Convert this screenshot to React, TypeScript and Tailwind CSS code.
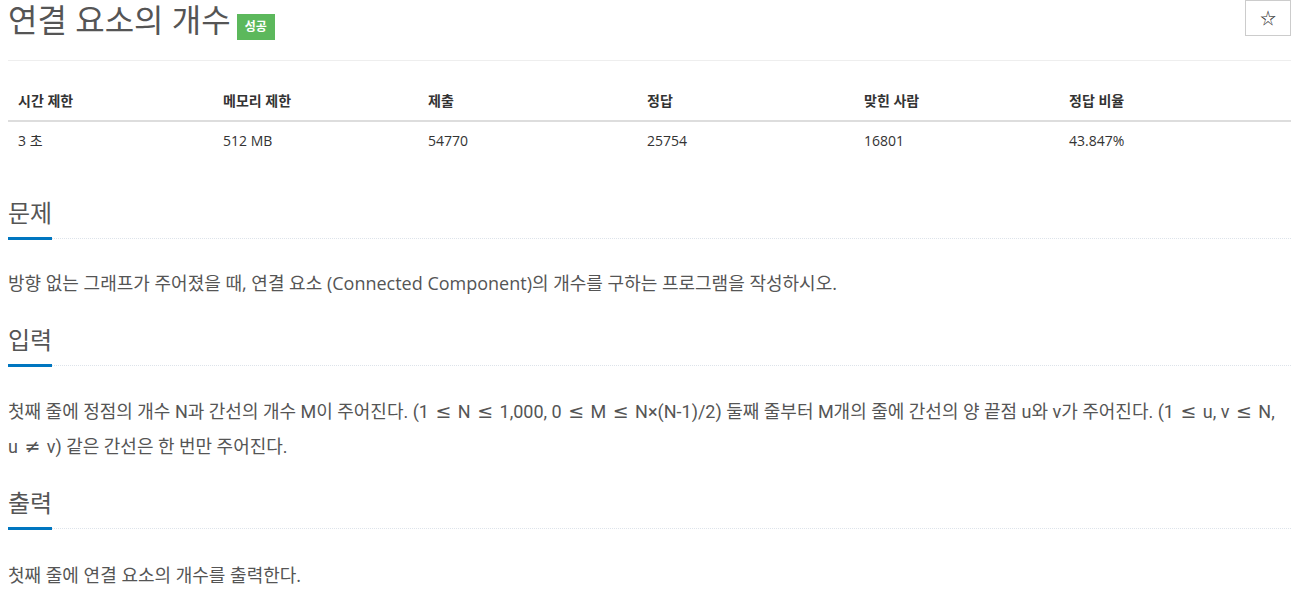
const font = { fontFamily: '"Open Sans", "Noto Sans CJK KR", sans-serif' };
const inputFont = { fontFamily: 'Roboto, "Noto Sans CJK KR", sans-serif' };

const stats = [
  { label: '시간 제한', value: '3 초', w: 'w-[205px]' },
  { label: '메모리 제한', value: '512 MB', w: 'w-[205px]' },
  { label: '제출', value: '54770', w: 'w-[219px]' },
  { label: '정답', value: '25754', w: 'w-[217px]' },
  { label: '맞힌 사람', value: '16801', w: 'w-[205px]' },
  { label: '정답 비율', value: '43.847%', w: '' },
];

function Section({ title, children, className }: { title: string; children: React.ReactNode; className?: string }) {
  return (
    <section className={className}>
      <div className="flex items-end">
        <h2 className="text-[24px] leading-[36px] text-[#555] pb-[6px] border-b-[3px] border-[#0076c0]">{title}</h2>
        <div className="flex-1 border-b border-dotted border-[#dde3ea] mb-[1px]" />
      </div>
      {children}
    </section>
  );
}

// math symbols rendered in a wider font, like the original page
function Sym({ c }: { c: string }) {
  return <span className="font-['DejaVu_Sans'] text-[19px] mx-[2px]">{c}</span>;
}

export default function App() {
  return (
    <div className="pl-2 pr-[2px] bg-white text-[#555] min-h-screen" style={font}>
      {/* Title */}
      <div className="flex items-start justify-between">
        <div className="flex items-center">
          <h1 className="text-[32px] leading-[38px] text-[#555]">연결 요소의 개수</h1>
          <span className="ml-[6px] mt-[14px] px-2 h-[26px] flex items-center bg-[#5cb85c] text-white text-[12px] font-bold">성공</span>
        </div>
        <button className="w-[46px] h-[36px] border border-[#ccc] bg-white text-[#333] text-[16px] flex items-center justify-center">☆</button>
      </div>
      <div className="mt-[20px] border-t border-[#eee]" />

      {/* Stats table */}
      <table className="mt-[20px] w-full table-fixed text-[14px]">
        <thead>
          <tr className="border-b-2 border-[#ddd]">
            {stats.map((s) => (
              <th key={s.label} className={`${s.w} text-left font-bold text-[#333] px-[10px] h-[40px]`}>{s.label}</th>
            ))}
          </tr>
        </thead>
        <tbody>
          <tr>
            {stats.map((s) => (
              <td key={s.label} className="px-[10px] h-[38px] text-[#333]">{s.value}</td>
            ))}
          </tr>
        </tbody>
      </table>

      <Section title="문제" className="mt-[36px]">
        <p className="mt-[26px] text-[18px] leading-[34px]">
          방향 없는 그래프가 주어졌을 때, 연결 요소 (Connected Component)의 개수를 구하는 프로그램을 작성하시오.
        </p>
      </Section>

      <Section title="입력" className="mt-[22px]">
        <p className="mt-[27px] text-[18px] leading-[34px] break-keep" style={inputFont}>
          첫째 줄에 정점의 개수 N과 간선의 개수 M이 주어진다. (1 <Sym c="≤" /> N <Sym c="≤" /> 1,000, 0 <Sym c="≤" /> M{' '}
          <Sym c="≤" /> N×(N-1)/2) 둘째 줄부터 M개의 줄에 간선의 양 끝점 u와 v가 주어진다. (1 <Sym c="≤" /> u, v{' '}
          <Sym c="≤" /> N, <span className="whitespace-nowrap">u <Sym c="≠" /> v)</span> 같은 간선은 한 번만 주어진다.
        </p>
      </Section>

      <Section title="출력" className="mt-[21px]">
        <p className="mt-[28px] text-[18px] leading-[34px]">첫째 줄에 연결 요소의 개수를 출력한다.</p>
      </Section>
    </div>
  );
}
